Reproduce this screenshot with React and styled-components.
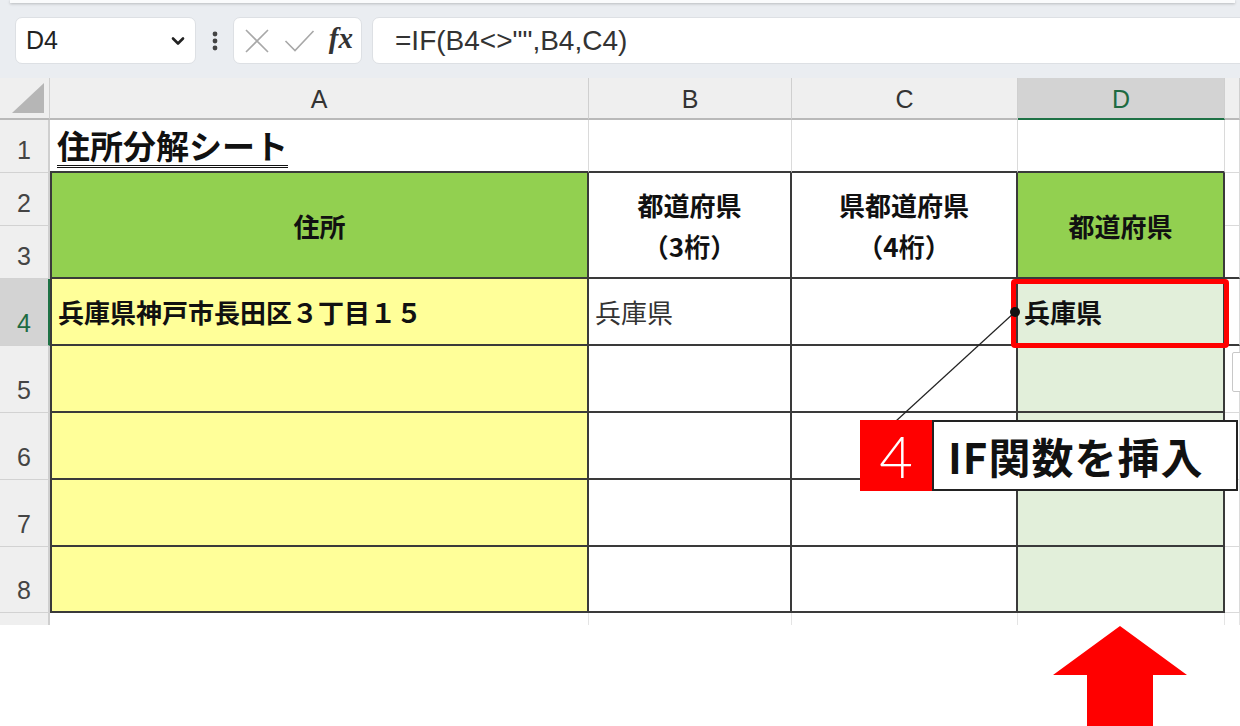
import React from 'react'
import styled, { createGlobalStyle } from 'styled-components'

const Global = createGlobalStyle`
  html, body { margin: 0; padding: 0; background: #fff; }
  body { font-family: "Noto Sans CJK JP", "Noto Sans", sans-serif; }
`

const JP = `"Noto Sans CJK JP", "Noto Sans", sans-serif`
const LATIN = `"Liberation Sans", Arial, sans-serif`

const Page = styled.div`
  position: relative;
  width: 1240px;
  height: 726px;
  overflow: hidden;
  background: #fff;
`

/* ---------- formula bar ---------- */

const FormulaBar = styled.div`
  height: 78px;
  background: #eaedf1;
  display: flex;
  flex-direction: column;
`

const TopEdge = styled.div`
  height: 3px;
  margin: 0 5px 0 10px;
  background: #fafbfc;
  box-shadow: 0 1px 3px rgba(0, 0, 0, 0.22);
`

const Controls = styled.div`
  display: flex;
  align-items: center;
  margin-top: 14px;
  padding-left: 15px;
  height: 47px;
`

const Box = styled.div`
  height: 47px;
  box-sizing: border-box;
  background: #fff;
  border: 1px solid #dde0e4;
  border-radius: 7px;
  display: flex;
  align-items: center;
`

const NameBox = styled(Box)`
  width: 181px;
  padding: 0 10px 0 10px;
  justify-content: space-between;
  font-family: ${LATIN};
  font-size: 25px;
  color: #222;
`

const Dots = styled.div`
  width: 37px;
  display: flex;
  justify-content: center;
`

const FxBox = styled(Box)`
  width: 129px;
  padding: 0 8px 0 10px;
  justify-content: space-between;
`

const Fx = styled.span`
  font-family: "Liberation Serif", "Times New Roman", serif;
  font-style: italic;
  font-weight: 700;
  font-size: 29px;
  color: #333;
  margin-top: -4px;
`

const FormulaInput = styled(Box)`
  flex: 1;
  margin-left: 10px;
  margin-right: -12px;
  padding-left: 22px;
  font-family: ${LATIN};
  font-size: 28px;
  color: #333;
`

/* ---------- sheet ---------- */

const Sheet = styled.div`
  display: grid;
  grid-template-columns: 50px 539px 203px 226px 207px 1fr;
  grid-template-rows: 42px 53px 53px 53px 67px 67px 67px 67px 66px 12px;
`

const Corner = styled.div`
  background: #efefef;
  border-right: 1px solid #d0d0d0;
  border-bottom: 2px solid #b9b9b9;
  box-sizing: border-box;
  position: relative;
  &::after {
    content: '';
    position: absolute;
    right: 5px;
    bottom: 5px;
    width: 32px;
    height: 30px;
    background: #b6b6b6;
    clip-path: polygon(100% 0, 100% 100%, 0 100%);
  }
`

const ColHead = styled.div`
  background: ${p => (p.$active ? '#d3d3d3' : '#efefef')};
  border-right: 1px solid #cfcfcf;
  border-bottom: 2px solid ${p => (p.$active ? '#1e7145' : '#b9b9b9')};
  box-sizing: border-box;
  display: flex;
  align-items: center;
  justify-content: center;
  font-family: ${LATIN};
  font-size: 25px;
  color: ${p => (p.$active ? '#1e6b42' : '#333')};
  padding-top: 2px;
`

const RowHead = styled.div`
  background: ${p => (p.$active ? '#d3d3d3' : '#efefef')};
  border-right: 2px solid ${p => (p.$active ? '#1e7145' : '#cfcfcf')};
  border-bottom: 1px solid #d2d2d2;
  box-sizing: border-box;
  display: flex;
  align-items: flex-end;
  justify-content: center;
  padding-bottom: 10px;
  font-family: ${LATIN};
  font-size: 25px;
  line-height: 24px;
  color: ${p => (p.$active ? '#1e6b42' : '#444')};
`

const edge = c => (c === 'ink' ? '2px solid #3a3a3a' : '1px solid #dadada')

const Cell = styled.div`
  grid-row: ${p => (p.$span ? `span ${p.$span}` : 'auto')};
  box-sizing: border-box;
  background: ${p => p.$fill || '#fff'};
  border-right: ${p => edge(p.$r)};
  border-bottom: ${p => edge(p.$b)};
  border-left: ${p => (p.$lead ? edge('ink') : 'none')};
  display: flex;
  flex-direction: column;
  align-items: ${p => (p.$center ? 'center' : 'flex-start')};
  justify-content: center;
  padding: ${p => (p.$center ? '0' : '0 0 0 6px')};
  font-family: ${JP};
  font-size: 26px;
  font-weight: ${p => (p.$bold ? 700 : 400)};
  color: ${p => (p.$bold ? '#111' : '#333')};
  line-height: 41px;
  white-space: nowrap;
`

const Title = styled.span`
  font-size: 33px;
  font-weight: 700;
  color: #111;
  text-decoration: underline double;
  text-decoration-thickness: 1px;
  text-underline-offset: 6px;
  padding-left: 1px;
`

const Tail = styled.div`
  background: #fff;
  border-right: 1px solid #e4e4e4;
  box-sizing: border-box;
`

const TailHead = styled.div`
  background: #efefef;
  border-right: 2px solid #cfcfcf;
  box-sizing: border-box;
`

/* ---------- annotations ---------- */

const RedFrame = styled.div`
  position: absolute;
  left: 1011px;
  top: 279px;
  width: 218px;
  height: 69px;
  box-sizing: border-box;
  border: 5px solid #ff0000;
  border-radius: 4px;
`

const FillButton = styled.div`
  position: absolute;
  left: 1232px;
  top: 352px;
  width: 20px;
  height: 40px;
  box-sizing: border-box;
  background: #fff;
  border: 1px solid #c8c8c8;
  border-radius: 2px;
`

const Drawing = styled.svg`
  position: absolute;
  left: 0;
  top: 0;
  pointer-events: none;
`

const Badge = styled.div`
  position: absolute;
  left: 860px;
  top: 420px;
  display: flex;
  height: 71px;
`

const Step = styled.div`
  width: 72px;
  background: #ff0000;
  color: #fff;
  display: flex;
  align-items: center;
  justify-content: center;
  font-family: Lato, "Noto Sans", sans-serif;
  font-weight: 300;
  font-size: 58px;
`

const Label = styled.div`
  width: 306px;
  box-sizing: border-box;
  background: #fff;
  border: 2px solid #222;
  display: flex;
  align-items: center;
  padding-left: 14px;
  font-family: ${JP};
  font-weight: 700;
  font-size: 42px;
  color: #111;
  letter-spacing: 1px;
`

const Chevron = () => (
  <svg width="14" height="10" viewBox="0 0 14 10">
    <path d="M2 2.5 L7 7.5 L12 2.5" fill="none" stroke="#222" strokeWidth="2.6" strokeLinecap="round" strokeLinejoin="round" />
  </svg>
)

const VDots = () => (
  <svg width="6" height="20" viewBox="0 0 6 20">
    <circle cx="3" cy="3" r="2.4" fill="#444" />
    <circle cx="3" cy="10" r="2.4" fill="#444" />
    <circle cx="3" cy="17" r="2.4" fill="#444" />
  </svg>
)

const Cancel = () => (
  <svg width="26" height="26" viewBox="0 0 26 26">
    <path d="M2 2 L24 24 M24 2 L2 24" stroke="#a8a8a8" strokeWidth="1.6" />
  </svg>
)

const Enter = () => (
  <svg width="31" height="24" viewBox="0 0 31 24">
    <path d="M1.5 12 L11 21.5 L29.5 2" fill="none" stroke="#a8a8a8" strokeWidth="1.6" />
  </svg>
)

const cols = ['A', 'B', 'C', 'D']
const emptyRows = [5, 6, 7, 8]

const YELLOW = '#ffff99'
const GREEN = '#92d050'
const PALE = '#e2efda'

const App = () => {
  return (
    <Page>
      <Global />
      <FormulaBar>
        <TopEdge />
        <Controls>
          <NameBox>
            <span>D4</span>
            <Chevron />
          </NameBox>
          <Dots>
            <VDots />
          </Dots>
          <FxBox>
            <Cancel />
            <Enter />
            <Fx>fx</Fx>
          </FxBox>
          <FormulaInput>=IF(B4&lt;&gt;"",B4,C4)</FormulaInput>
        </Controls>
      </FormulaBar>

      <Sheet>
        <Corner />
        {cols.map(c => (
          <ColHead key={c} $active={c === 'D'}>{c}</ColHead>
        ))}
        <ColHead />

        <RowHead>1</RowHead>
        <Cell $b="ink">
          <Title>住所分解シート</Title>
        </Cell>
        <Cell $b="ink" />
        <Cell $b="ink" />
        <Cell $b="ink" />
        <Cell />

        <RowHead>2</RowHead>
        <Cell $span={2} $lead $r="ink" $b="ink" $fill={GREEN} $center $bold>住所</Cell>
        <Cell $span={2} $r="ink" $b="ink" $center $bold>
          <span>都道府県</span>
          <span>（3桁）</span>
        </Cell>
        <Cell $span={2} $r="ink" $b="ink" $center $bold>
          <span>県都道府県</span>
          <span>（4桁）</span>
        </Cell>
        <Cell $span={2} $r="ink" $b="ink" $fill={GREEN} $center $bold>都道府県</Cell>
        <Cell />
        <RowHead>3</RowHead>
        <Cell $b="ink" />

        <RowHead $active>4</RowHead>
        <Cell $lead $r="ink" $b="ink" $fill={YELLOW} $bold>兵庫県神戸市長田区３丁目１５</Cell>
        <Cell $r="ink" $b="ink">兵庫県</Cell>
        <Cell $r="ink" $b="ink" />
        <Cell $r="ink" $b="ink" $fill={PALE} $bold>兵庫県</Cell>
        <Cell $b="ink" />

        {emptyRows.map(n => (
          <React.Fragment key={n}>
            <RowHead>{n}</RowHead>
            <Cell $lead $r="ink" $b="ink" $fill={YELLOW} />
            <Cell $r="ink" $b="ink" />
            <Cell $r="ink" $b="ink" />
            <Cell $r="ink" $b="ink" $fill={PALE} />
            <Cell />
          </React.Fragment>
        ))}

        <TailHead />
        <Tail />
        <Tail />
        <Tail />
        <Tail />
        <Tail />
      </Sheet>

      <FillButton />
      <RedFrame />

      <Drawing width="1240" height="726" viewBox="0 0 1240 726">
        <line x1="1015" y1="312" x2="896" y2="421" stroke="#222" strokeWidth="1.2" />
        <circle cx="1015" cy="312" r="5" fill="#111" />
        <polygon points="1120,626 1187,675 1153,675 1153,726 1087,726 1087,675 1053,675" fill="#ff0000" />
      </Drawing>

      <Badge>
        <Step>4</Step>
        <Label>IF関数を挿入</Label>
      </Badge>
    </Page>
  )
}

export default App
